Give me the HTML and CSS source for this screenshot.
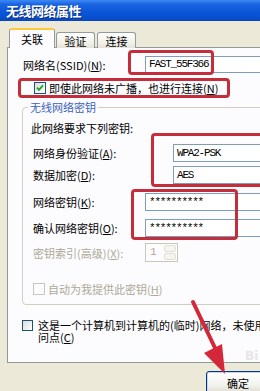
FILE: index.html
```html
<!DOCTYPE html>
<html lang="zh-CN">
<head>
<meta charset="utf-8">
<title>无线网络属性</title>
<link rel="stylesheet" href="styles.css">
</head>
<body>
<div class="window">
  <div class="titlebar">无线网络属性</div>
  <div class="client">
    <div class="tabs">
      <div class="tab active">关联</div>
      <div class="tab">验证</div>
      <div class="tab">连接</div>
    </div>
    <div class="panel">
      <div class="row ssid">
        <span class="lab lab-ssid">网络名(SSID)(<u>N</u>):</span>
        <span class="field field-ssid">FAST_55F366</span>
      </div>
      <div class="check-row broadcast">
        <span class="cbox checked"><svg width="8" height="8" viewBox="0 0 8 8"><path d="M1 3.6 L3 5.8 L7 1.4" fill="none" stroke="#21a121" stroke-width="1.8"/></svg></span>
        <span class="ctext">即使此网络未广播，也进行连接(<u>N</u>)</span>
      </div>
      <div class="group">
        <div class="legend">无线网络密钥</div>
        <div class="intro">此网络要求下列密钥:</div>
        <div class="row r-auth">
          <span class="lab lab-wide">网络身份验证(<u>A</u>):</span>
          <span class="field field-wide">WPA2-PSK</span>
        </div>
        <div class="row r-enc">
          <span class="lab lab-wide">数据加密(<u>D</u>):</span>
          <span class="field field-wide">AES</span>
        </div>
        <div class="row r-key">
          <span class="lab lab-key">网络密钥(<u>K</u>):</span>
          <span class="field field-key">**********</span>
        </div>
        <div class="row r-confirm">
          <span class="lab lab-key">确认网络密钥(<u>O</u>):</span>
          <span class="field field-key">**********</span>
        </div>
        <div class="row r-spin disabled">
          <span class="lab lab-key">密钥索引(高级)(<u>X</u>):</span>
          <span class="spin"><span class="spin-val">1</span><span class="spin-btns"><span class="up"></span><span class="dn"></span></span></span>
        </div>
        <div class="check-row auto disabled">
          <span class="cbox"></span>
          <span class="ctext">自动为我提供此密钥(<u>H</u>)</span>
        </div>
      </div>
      <div class="check-row adhoc">
        <span class="cbox"></span>
        <span class="ctext two"><span class="ln">这是一个计算机到计算机的(临时)网络，未使用无线访</span><span class="ln">问点(<u>C</u>)</span></span>
      </div>
    </div>
    <div class="buttons">
      <button class="btn">确定</button>
    </div>
  </div>
</div>

<div class="mark m-ssid"></div>
<div class="mark m-broadcast"></div>
<div class="mark m-auth"></div>
<div class="mark m-key"></div>
<div class="watermark">Bi</div>
<svg class="arrow" width="260" height="391" viewBox="0 0 260 391">
  <line x1="193" y1="302" x2="216" y2="350" stroke="#d2283a" stroke-width="4" stroke-linecap="round"/>
  <polygon points="204,353 222,344 225,374" fill="#d2283a"/>
</svg>
</body>
</html>
```
FILE: styles.css
```css
* { box-sizing: border-box; }
html, body { margin: 0; padding: 0; }
body {
  width: 260px;
  height: 391px;
  overflow: hidden;
  position: relative;
  background: #ece9d8;
  font-family: "Noto Sans CJK SC", "Noto Sans", sans-serif;
  font-size: 11px;
  line-height: 14px;
  color: #000;
}
u { text-decoration: underline; text-underline-offset: 1px; }

.titlebar {
  height: 21px;
  padding-left: 6px;
  display: flex;
  align-items: center;
  color: #fff;
  font-weight: bold;
  font-size: 13px;
  letter-spacing: -0.5px;
  text-shadow: 1px 1px 0 #0a2a80;
  background: linear-gradient(#3d8af5 0%, #1a64e2 20%, #0a56d8 60%, #0650cf 85%, #0a45b8 100%);
}

.client { padding: 7px 0 0 7px; }

.tabs {
  display: flex;
  align-items: flex-end;
  height: 20px;
  padding-left: 2px;
  margin-bottom: -1px;
  position: relative;
  z-index: 1;
}
.tab {
  height: 16px;
  width: 39px;
  margin-right: 2px;
  border: 1px solid #919b9c;
  border-bottom: none;
  border-radius: 3px 3px 0 0;
  background: linear-gradient(#ffffff, #f0efe8 70%, #e4e2d8);
  display: flex;
  align-items: center;
  justify-content: center;
  font-size: 11px;
  line-height: 14px;
}
.tab.active {
  height: 20px;
  width: 46px;
  margin-right: 1px;
  border-top: 2px solid #ffc83c;
  background: #fcfcfe;
  padding-bottom: 1px;
}

.panel {
  width: 280px;
  height: 316px;
  border: 1px solid #919b9c;
  background: #fcfcfe;
}

.row {
  display: flex;
  align-items: center;
  height: 18px;
}
.lab { flex: none; white-space: nowrap; }
.field {
  flex: none;
  height: 18px;
  border: 1px solid #7f9db9;
  background: #fff;
  font-family: "Liberation Mono", "DejaVu Sans Mono", monospace;
  font-size: 11px;
  letter-spacing: -1.2px;
  line-height: 16px;
  padding-left: 3px;
  white-space: nowrap;
}

.ssid { margin-top: 8px; padding-left: 15px; height: 17px; }
.lab-ssid { width: 122px; }
.field-ssid { width: 140px; height: 17px; line-height: 15px; }

.check-row { display: flex; align-items: center; }
.cbox {
  flex: none;
  width: 12px;
  height: 12px;
  border: 1px solid #1c5180;
  background: linear-gradient(135deg, #dcdcd7, #ffffff);
  display: flex;
  align-items: center;
  justify-content: center;
}
.ctext { white-space: nowrap; }
.broadcast { margin-top: 9px; padding-left: 26px; height: 12px; }
.broadcast .ctext { margin-left: 3px; }

.group {
  margin: 13px 0 0 14px;
  width: 260px;
  border: 1px solid #d0d0bf;
  border-radius: 4px;
  padding-bottom: 9px;
}
.legend {
  width: fit-content;
  margin: -8px 0 0 5px;
  padding: 0 2px;
  background: #fcfcfe;
  color: #3a62c0;
  line-height: 14px;
}
.intro { margin-top: 7px; padding-left: 8px; line-height: 14px; }
.group .row { padding-left: 10px; }
.lab-wide { width: 140px; }
.field-wide { width: 100px; }
.lab-key { width: 112px; }
.field-key { width: 130px; }
.r-auth { margin-top: 9px; }
.r-enc { margin-top: 4px; }
.r-key { margin-top: 9px; }
.r-confirm { margin-top: 8px; }
.r-spin { margin-top: 6px; height: 19px; }

.disabled { color: #aca899; }
.spin {
  flex: none;
  width: 33px;
  height: 19px;
  border: 1px solid #c9c7ba;
  background: #fcfcfe;
  display: flex;
  align-items: stretch;
}
.spin-val {
  flex: 1;
  padding-left: 4px;
  line-height: 17px;
  font-family: "Liberation Mono", monospace;
  font-size: 11px;
}
.spin-btns {
  width: 13px;
  display: flex;
  flex-direction: column;
  gap: 1px;
  padding: 1px 1px 1px 0;
}
.spin-btns span {
  flex: 1;
  border: 1px solid #e2e0d4;
  border-radius: 2px;
  background: #f5f4ee;
}

.auto { margin-top: 21px; padding-left: 10px; height: 12px; }
.auto .cbox { border-color: #c9c7ba; background: #fcfcfe; }
.auto .ctext { margin-left: 3px; }

.adhoc { margin-top: 14px; padding-left: 14px; align-items: flex-start; }
.adhoc .cbox { width: 11px; height: 11px; margin-top: 1px; }
.ctext.two {
  margin-left: 5px;
  display: flex;
  flex-direction: column;
  font-size: 11px;
}
.ctext.two .ln { display: block; line-height: 12px; height: 12px; }

.buttons { padding: 8px 0 0 199px; }
.btn {
  width: 64px;
  height: 23px;
  border: 1px solid #003c74;
  border-radius: 3px;
  background: linear-gradient(#ffffff, #f3f3ef 60%, #dedbd0);
  box-shadow: inset 0 0 0 1px #c3d3fd;
  font-family: "Noto Sans CJK SC", sans-serif;
  font-size: 11px;
  line-height: 14px;
  padding: 0;
  text-align: center;
  color: #000;
}

.mark {
  position: absolute;
  border: 3px solid #c42e3a;
  border-radius: 4px;
}
.m-ssid { left: 128px; top: 50px; width: 86px; height: 25px; }
.m-broadcast { left: 18px; top: 78px; width: 212px; height: 20px; }
.m-auth { left: 151px; top: 133px; width: 115px; height: 54px; }
.m-key { left: 131px; top: 189px; width: 107px; height: 51px; }

.watermark {
  position: absolute;
  left: 245px;
  top: 349px;
  font-family: "DejaVu Sans", sans-serif;
  font-weight: bold;
  font-size: 12px;
  line-height: 14px;
  color: #e6e6e6;
}
.arrow { position: absolute; left: 0; top: 0; pointer-events: none; }
```
